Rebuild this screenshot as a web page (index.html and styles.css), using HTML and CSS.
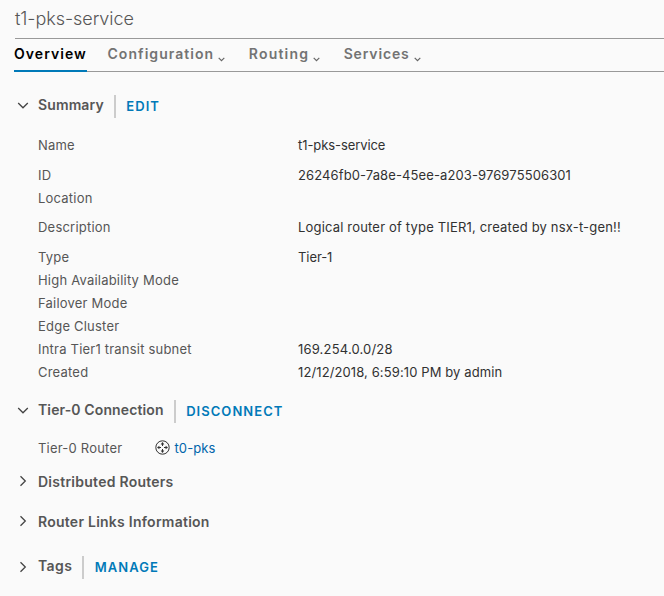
FILE: index.html
```html
<!DOCTYPE html>
<html lang="en">
<head>
<meta charset="utf-8">
<title>t1-pks-service</title>
<link rel="stylesheet" href="styles.css">
</head>
<body>
<header class="page-head"><h1 class="title">t1-pks-service</h1></header>
<nav class="tabs">
  <a class="tab tab-active"><span>Overview</span></a>
  <a class="tab tab-config"><span>Configuration</span><svg class="caret" viewBox="0 0 7 5"><path d="M.7.8 3.5 3.6 6.3.8"/></svg></a>
  <a class="tab tab-routing"><span>Routing</span><svg class="caret" viewBox="0 0 7 5"><path d="M.7.8 3.5 3.6 6.3.8"/></svg></a>
  <a class="tab tab-services"><span>Services</span><svg class="caret" viewBox="0 0 7 5"><path d="M.7.8 3.5 3.6 6.3.8"/></svg></a>
</nav>
<main>
  <section>
    <div class="section-head">
      <svg class="chevron" viewBox="0 0 12 12"><path d="M1.2 3 6 7.8 10.8 3"/></svg>
      <h2>Summary</h2><a class="action">EDIT</a>
    </div>
    <dl class="details">
      <dt>Name</dt><dd class="v-name">t1-pks-service</dd>
      <dt>ID</dt><dd>26246fb0-7a8e-45ee-a203-976975506301</dd>
      <dt>Location</dt><dd></dd>
      <dt>Description</dt><dd class="v-desc">Logical router of type TIER1, created by nsx-t-gen!!</dd>
      <dt>Type</dt><dd class="v-name">Tier-1</dd>
      <dt>High Availability Mode</dt><dd></dd>
      <dt>Failover Mode</dt><dd></dd>
      <dt>Edge Cluster</dt><dd></dd>
      <dt>Intra Tier1 transit subnet</dt><dd class="v-desc">169.254.0.0/28</dd>
      <dt>Created</dt><dd>12/12/2018, 6:59:10 PM by admin</dd>
    </dl>
  </section>
  <section class="connection">
    <div class="section-head">
      <svg class="chevron" viewBox="0 0 12 12"><path d="M1.2 3 6 7.8 10.8 3"/></svg>
      <h2>Tier-0 Connection</h2><a class="action">DISCONNECT</a>
    </div>
    <div class="router">
      <span class="router-label">Tier-0 Router</span>
      <svg class="router-icon" viewBox="0 0 15 15"><circle cx="7.5" cy="7.5" r="6.7"/><path class="arrows" d="M7.5 2 9.3 4.4H5.7ZM7.5 13 9.3 10.6H5.7ZM2 7.5 4.4 5.7V9.3ZM13 7.5 10.6 5.7V9.3Z"/><path d="M7.5 4v2M7.5 9v2M4 7.5h2M9 7.5h2"/></svg>
      <a class="router-link">t0-pks</a>
    </div>
  </section>
  <section class="section-head plain distributed">
    <svg class="chevron" viewBox="0 0 12 12"><path d="M3.5 1.2 8.3 6 3.5 10.8"/></svg>
    <h2>Distributed Routers</h2>
  </section>
  <section class="section-head plain links">
    <svg class="chevron" viewBox="0 0 12 12"><path d="M3.5 1.2 8.3 6 3.5 10.8"/></svg>
    <h2>Router Links Information</h2>
  </section>
  <section class="section-head tags">
    <svg class="chevron" viewBox="0 0 12 12"><path d="M3.5 1.2 8.3 6 3.5 10.8"/></svg>
    <h2>Tags</h2><a class="action">MANAGE</a>
  </section>
</main>
</body>
</html>
```
FILE: styles.css
```css
* { box-sizing: border-box; }
body { margin: 0; background: #fafafa; color: #565656; font: 13px/23px Inter, "Open Sans", sans-serif; letter-spacing: .21px; height: 596px; overflow: hidden; }
h1, h2, dl, dd { margin: 0; }
.page-head { margin-left: 15px; height: 39px; border-bottom: 1px solid #999; }
.title { font-size: 18px; line-height: 38px; font-weight: 300; color: #565656; letter-spacing: -.05px; }
.tabs { display: flex; margin-left: 14px; height: 33px; border-bottom: 1px solid #999; }
.tab { display: flex; gap: 4px; height: 33px; line-height: 29px; font-size: 14px; font-weight: 600; letter-spacing: 1.05px; color: #737373; margin-right: 23.5px; }
.tab-active { color: #000; border-bottom: 2px solid #0079b8; width: 73px; margin-right: 20.5px; }
.tab-routing { letter-spacing: 1.2px; }
.tab-services { letter-spacing: .85px; }
.caret { width: 7px; height: 5px; margin-top: 18px; fill: none; stroke: #666; stroke-width: 1.2; }
.section-head { display: flex; align-items: center; height: 23px; margin-left: 17px; }
.section-head h2 { font-size: 14px; line-height: 19px; font-weight: 600; padding-bottom: 4px; letter-spacing: .12px; }
.section-head.plain h2 { padding-bottom: 2px; letter-spacing: .25px; }
.section-head.tags h2 { letter-spacing: .4px; }
main { padding-top: 23px; }
.chevron { width: 12px; height: 12px; margin: 0 9px 1px 0; fill: none; stroke: #444; stroke-width: 1.3; flex: none; }
.plain .chevron { margin-bottom: 3px; }
.action { margin-left: 10px; padding-left: 10.5px; height: 23px; line-height: 23px; border-left: 2px solid #ccc; color: #0079b8; font-weight: 600; font-size: 13px; letter-spacing: 1.05px; }
.details { display: grid; grid-template-columns: 260px 1fr; grid-template-rows: 30px 23px 29px 30px repeat(6, 23px); margin: 16px 0 0 38px; }
.details dd { color: #313131; white-space: nowrap; letter-spacing: .11px; }
.details dd.v-name { letter-spacing: -.08px; }
.details dd.v-desc { letter-spacing: .18px; }
.connection { margin-top: 16px; }
.router { display: flex; align-items: center; height: 23px; margin: 14px 0 0 38px; }
.router-label { width: 116.5px; }
.router-icon { width: 15px; height: 15px; margin: 0 5px 2px 0; fill: none; stroke: #313131; stroke-width: 1; }
.router-icon .arrows { fill: #313131; stroke: none; }
.router-link { color: #0065ab; letter-spacing: .1px; }
.distributed { margin-top: 11px; }
.links { margin-top: 17px; }
.tags { margin-top: 22px; }
```
